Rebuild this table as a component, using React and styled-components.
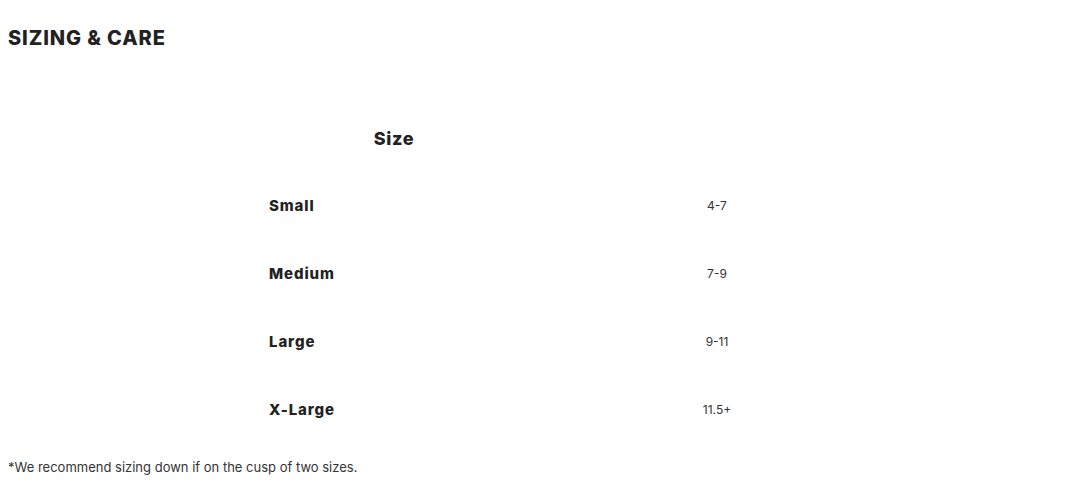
import React from "react";
import styled, { createGlobalStyle } from "styled-components";

const Global = createGlobalStyle`
  html, body { margin: 0; padding: 0; background: #fff; }
  body { font-family: "Inter", "Open Sans", sans-serif; color: #222; }
`;

const Page = styled.div`
  padding: 0 8px;
`;

const Title = styled.h2`
  margin: 0;
  padding-top: 26px;
  height: 24px;
  line-height: 24px;
  font-size: 20px;
  font-weight: 800;
  letter-spacing: 0.9px;
  text-transform: uppercase;
  color: #222;
`;

const Table = styled.div`
  margin: 55px 0 0 249px;
  display: grid;
  grid-template-columns: 274px 372px;
  grid-template-rows: 66px repeat(4, 68px);
  width: 646px;
`;

const HeadCell = styled.div`
  display: flex;
  align-items: center;
  justify-content: center;
  font-size: 18px;
  font-weight: 800;
  letter-spacing: 0.6px;
  color: #222;
`;

const LabelCell = styled.div`
  display: flex;
  align-items: center;
  padding-left: 12px;
  font-size: 15px;
  font-weight: 800;
  letter-spacing: 0.9px;
  color: #222;
`;

const ValueCell = styled.div`
  display: flex;
  align-items: center;
  justify-content: center;
  font-size: 12px;
  font-weight: 400;
  color: #333;
`;

const Note = styled.p`
  margin: 15px 0 0;
  font-size: 13px;
  line-height: 18px;
  color: #333;
`;

const rows = [
  ["Small", "4-7"],
  ["Medium", "7-9"],
  ["Large", "9-11"],
  ["X-Large", "11.5+"],
];

export default function App() {
  return (
    <Page>
      <Global />
      <Title>Sizing &amp; Care</Title>
      <Table>
        <HeadCell>Size</HeadCell>
        <HeadCell />
        {rows.map(([l, v]) => (
          <React.Fragment key={l}>
            <LabelCell>{l}</LabelCell>
            <ValueCell>{v}</ValueCell>
          </React.Fragment>
        ))}
      </Table>
      <Note>*We recommend sizing down if on the cusp of two sizes.</Note>
    </Page>
  );
}
